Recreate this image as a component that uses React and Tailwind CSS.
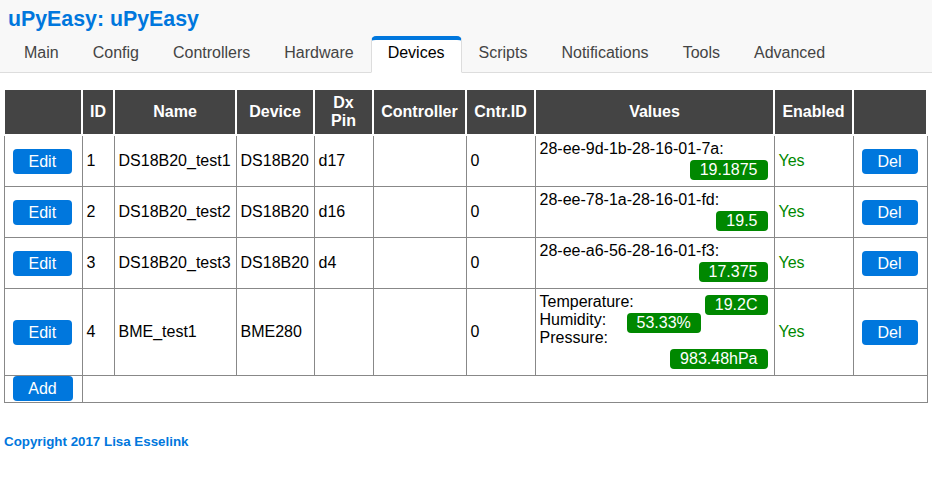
import React, { Fragment } from "react";

const tabs = ["Main", "Config", "Controllers", "Hardware", "Devices", "Scripts", "Notifications", "Tools", "Advanced"];

const rows = [
  { id: "1", name: "DS18B20_test1", device: "DS18B20", pin: "d17", cid: "0", values: [["28-ee-9d-1b-28-16-01-7a:", "19.1875"]] },
  { id: "2", name: "DS18B20_test2", device: "DS18B20", pin: "d16", cid: "0", values: [["28-ee-78-1a-28-16-01-fd:", "19.5"]] },
  { id: "3", name: "DS18B20_test3", device: "DS18B20", pin: "d4", cid: "0", values: [["28-ee-a6-56-28-16-01-f3:", "17.375"]] },
  {
    id: "4",
    name: "BME_test1",
    device: "BME280",
    pin: "",
    cid: "0",
    values: [
      ["Temperature:", "19.2C"],
      ["Humidity:", "53.33%"],
      ["Pressure:", "983.48hPa"],
    ],
  },
];

const td = "border border-[#888] px-1 py-1 align-middle";
const th = "border-2 border-white px-1 py-1 leading-[18px] font-bold text-center";
const btn = "inline-block m-1 rounded-[4px] bg-[#07d] px-4 py-1 leading-[17px] text-white align-middle";

export default function App() {
  return (
    <div
      className="min-h-screen bg-white text-[16px] leading-[1.15] text-black"
      style={{ fontFamily: '"Liberation Sans", Arial, sans-serif' }}
    >
      <div className="flex h-[73px] flex-col border-b border-[#ddd] bg-[#f8f8f8]">
        <div className="pl-2 pt-[7px] text-[21.33px] font-bold text-[#07d]">uPyEasy: uPyEasy</div>
        <div className="-mb-px mt-auto flex pl-[7px]">
          {tabs.map((t) => {
            const active = t === "Devices";
            return (
              <div
                key={t}
                className={
                  "rounded-t-[5px] border-x border-b border-t-4 px-4 pb-[10px] pt-1 whitespace-nowrap " +
                  (active
                    ? "border-x-[#ddd] border-b-white border-t-[#07d] bg-white text-black"
                    : "border-transparent text-[#444]")
                }
              >
                {t}
              </div>
            );
          })}
        </div>
      </div>

      <div className="pl-[3px] pr-[6px] pt-[15px]">
        <table className="w-full table-fixed border-collapse leading-[18px]">
          <colgroup>
            <col className="w-[78px]" />
            <col className="w-[32px]" />
            <col className="w-[122px]" />
            <col className="w-[78px]" />
            <col className="w-[59px]" />
            <col className="w-[93px]" />
            <col className="w-[69px]" />
            <col className="w-[239px]" />
            <col className="w-[79px]" />
            <col className="w-[74px]" />
          </colgroup>
          <thead>
            <tr className="bg-[#444] text-white">
              <th className={th}></th>
              <th className={th}>ID</th>
              <th className={th}>Name</th>
              <th className={th}>Device</th>
              <th className={th}>
                Dx
                <br />
                Pin
              </th>
              <th className={th}>Controller</th>
              <th className={th}>Cntr.ID</th>
              <th className={th}>Values</th>
              <th className={th}>Enabled</th>
              <th className={th}></th>
            </tr>
          </thead>
          <tbody>
            {rows.map((r) => (
              <tr key={r.id}>
                <td className={td}>
                  <span className={btn}>Edit</span>
                </td>
                <td className={td}>{r.id}</td>
                <td className={td}>{r.name}</td>
                <td className={td}>{r.device}</td>
                <td className={td}>{r.pin}</td>
                <td className={td}></td>
                <td className={td}>{r.cid}</td>
                <td className={td}>
                  {r.values.map(([k, v], i) => (
                    <Fragment key={i}>
                      {i > 0 && <br />}
                      {k}
                      <div className="float-right m-[2px] rounded-[4px] bg-[#080] px-[10px] py-px text-white">{v}</div>
                    </Fragment>
                  ))}
                </td>
                <td className={td + " text-[#080]"}>Yes</td>
                <td className={td}>
                  <span className={btn}>Del</span>
                </td>
              </tr>
            ))}
            <tr>
              <td className="border border-[#888] px-1 pb-px pt-0">
                <span className="mx-1 block w-[60px] rounded-[4px] bg-[#07d] py-1 text-center leading-[17px] text-white">Add</span>
              </td>
              <td className="border border-[#888]" colSpan={9}></td>
            </tr>
          </tbody>
        </table>
        <div className="mt-[31px] pl-px text-[13.33px] font-bold text-[#07d]">Copyright 2017 Lisa Esselink</div>
      </div>
    </div>
  );
}
